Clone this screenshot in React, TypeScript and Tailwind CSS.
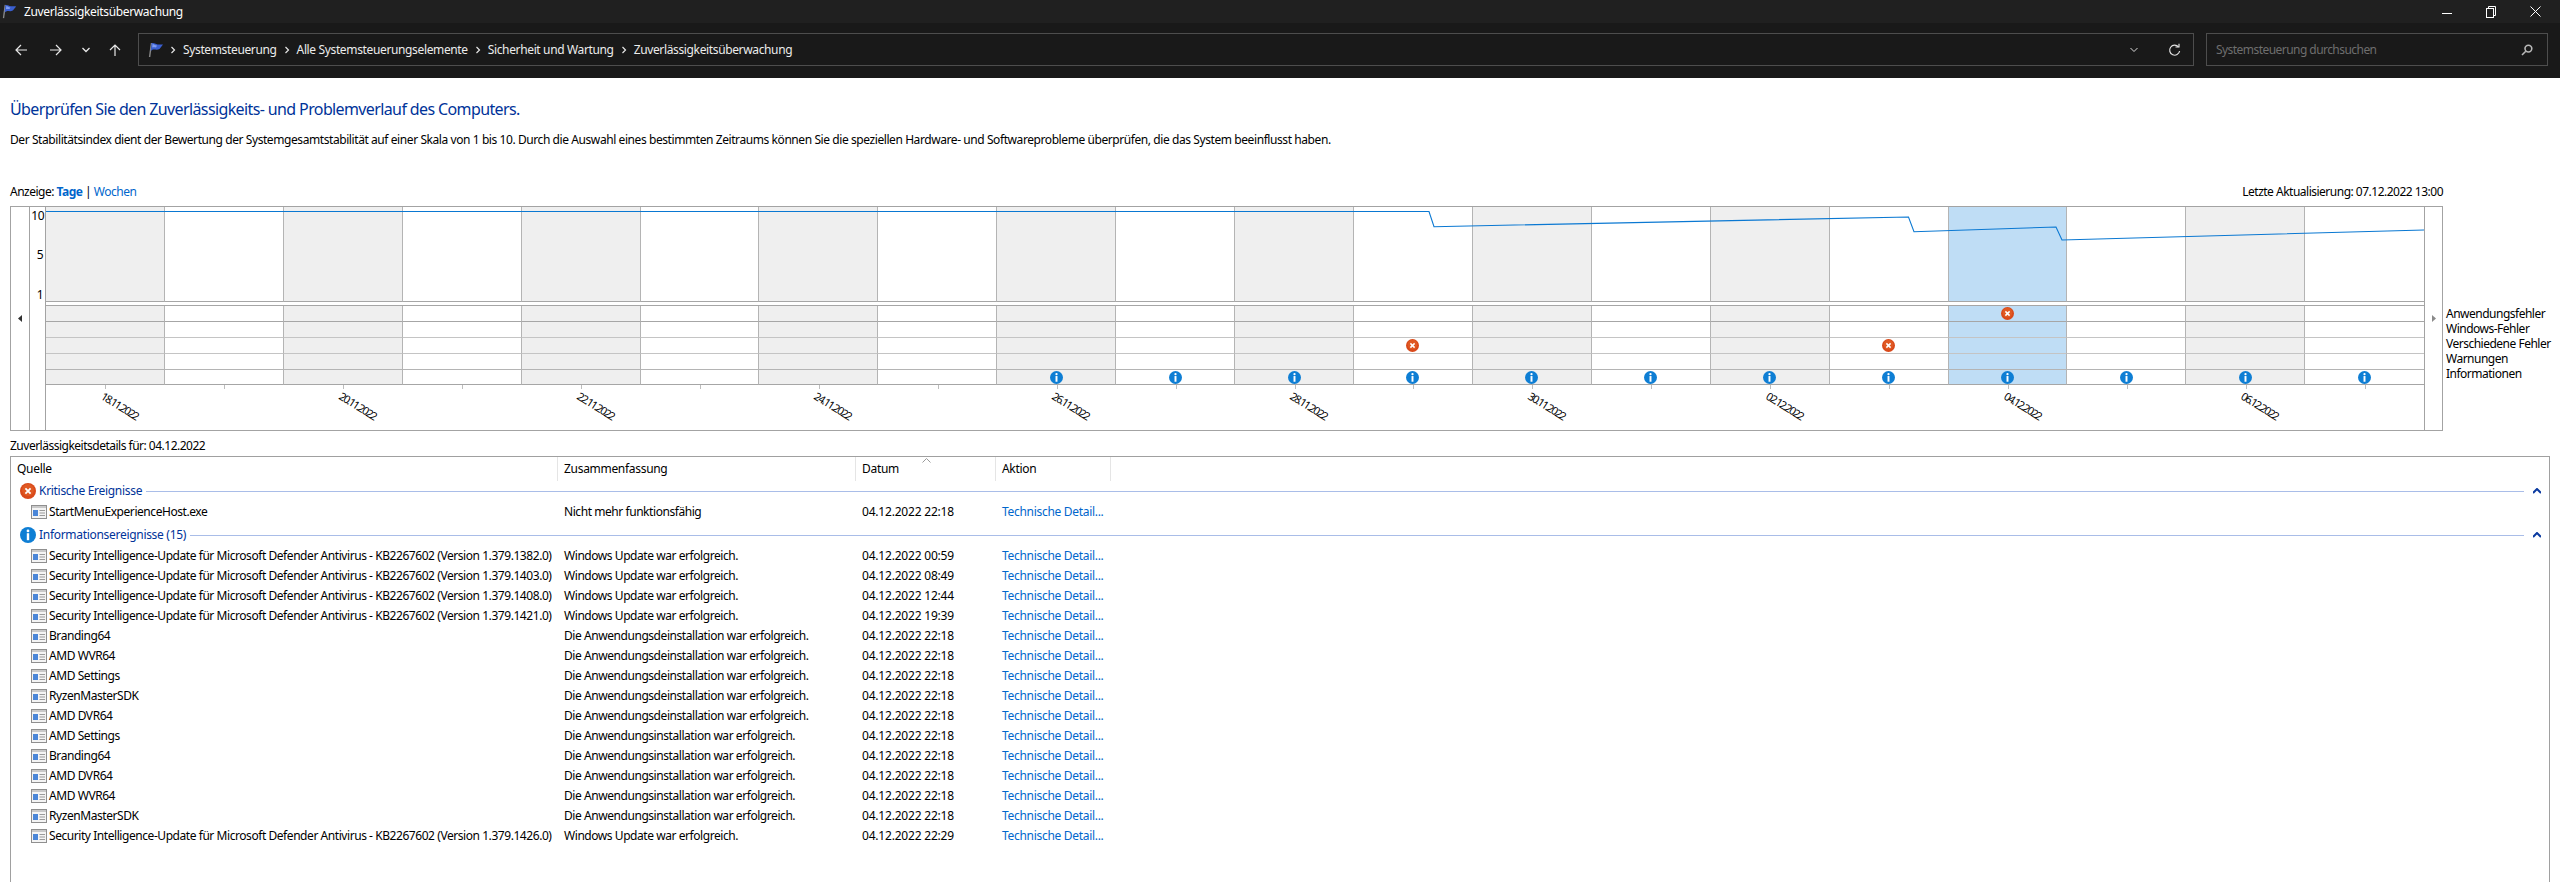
import React from "react";

const FONT = "font-['Noto_Sans','Liberation_Sans',sans-serif]";
const GRID = "grid grid-cols-[547px_298px_140px_115px_1fr]";

function Flag({ size = 16 }: { size?: number }) {
  return (
    <svg width={size} height={size} viewBox="0 0 16 16" className="shrink-0">
      <path d="M3.5 1 L1.6 15" stroke="#8a8a8a" strokeWidth="1.4" fill="none" />
      <path d="M3.6 1.2 C6 0.4 7 2 9.5 2.4 C11.5 2.6 13 2.2 15 2.6 C13.6 4.6 12.5 5.6 11.5 7 C9 8.4 7 7.2 5 7.6 C4.2 7.8 3.4 8.4 2.8 9 Z" fill="#3a5fd0" />
      <path d="M4.6 2 C6 2 7 3.4 9 3.6 L8 5.4 C6.6 5.4 5.4 5 4.2 5.6 Z" fill="#7f9cf0" />
    </svg>
  );
}

function ErrorIcon({ size = 13 }: { size?: number }) {
  return (
    <svg width={size} height={size} viewBox="0 0 16 16" className="shrink-0">
      <circle cx="8" cy="8" r="8" fill="#d9491a" />
      <circle cx="8" cy="7" r="6" fill="#e86a2c" opacity="0.5" />
      <path d="M5.4 5.4 L10.6 10.6 M10.6 5.4 L5.4 10.6" stroke="#fff" strokeWidth="1.8" />
    </svg>
  );
}

function InfoIcon({ size = 13 }: { size?: number }) {
  return (
    <svg width={size} height={size} viewBox="0 0 16 16" className="shrink-0">
      <circle cx="8" cy="8" r="8" fill="#0e7ed4" />
      <circle cx="8" cy="3.9" r="1.4" fill="#fff" />
      <rect x="6.8" y="6.2" width="2.4" height="7" fill="#fff" />
    </svg>
  );
}

function ListIcon() {
  return (
    <svg width="16" height="14" viewBox="0 0 16 14" className="shrink-0">
      <rect x="0.5" y="0.5" width="15" height="13" fill="#f4f4f4" stroke="#8f8f8f" />
      <rect x="1" y="1" width="14" height="2" fill="#c9c9c9" />
      <rect x="2" y="5" width="5" height="6" fill="#4a86d8" />
      <path d="M8.5 5.5 H14 M8.5 8 H14 M8.5 10.5 H14" stroke="#9a9a9a" strokeWidth="1" />
    </svg>
  );
}

function Collapse() {
  return (
    <svg width="8" height="6" viewBox="0 0 8 6" className="shrink-0">
      <path d="M0 5 L4 1 L8 5" stroke="#0a3aa0" strokeWidth="2" fill="none" />
    </svg>
  );
}

function Crumb() {
  return (
    <svg width="6" height="8" viewBox="0 0 6 8" className="shrink-0">
      <path d="M1.5 1 L4.5 4 L1.5 7" stroke="#e6e6e6" strokeWidth="1.2" fill="none" />
    </svg>
  );
}

function TitleBar() {
  return (
    <div className="flex h-[23px] items-center bg-[#202020] pl-[2px] text-white">
      <Flag size={15} />
      <span className="ml-[7px] text-[12px] tracking-[-0.35px]">Zuverlässigkeitsüberwachung</span>
      <div className="ml-auto flex items-center gap-[34px] pr-[19px]">
        <svg width="10" height="10" viewBox="0 0 10 10"><path d="M0 6.5 H10" stroke="#fff" /></svg>
        <svg width="10" height="12" viewBox="0 0 10 12" fill="none" stroke="#fff"><rect x="0.5" y="2.5" width="7" height="9" /><path d="M2.5 2.5 V0.5 H9.5 V9.5 H7.5" /></svg>
        <svg width="11" height="11" viewBox="0 0 11 11"><path d="M0.5 0.5 L10.5 10.5 M10.5 0.5 L0.5 10.5" stroke="#fff" /></svg>
      </div>
    </div>
  );
}

function Toolbar() {
  const crumbs = ["Systemsteuerung", "Alle Systemsteuerungselemente", "Sicherheit und Wartung", "Zuverlässigkeitsüberwachung"];
  return (
    <div className="flex h-[55px] items-start bg-[#191919] pt-[10px]">
      <div className="flex h-[33px] w-[138px] shrink-0 items-center pl-[15px]">
        <svg width="12" height="12" viewBox="0 0 12 12" fill="none" stroke="#e8e8e8" strokeWidth="1.2"><path d="M12 6 H1 M6 1 L1 6 L6 11" /></svg>
        <svg className="ml-[23px]" width="12" height="12" viewBox="0 0 12 12" fill="none" stroke="#e8e8e8" strokeWidth="1.2"><path d="M0 6 H11 M6 1 L11 6 L6 11" /></svg>
        <svg className="ml-[20px]" width="8" height="6" viewBox="0 0 8 6" fill="none" stroke="#e8e8e8" strokeWidth="1.3"><path d="M0.5 1 L4 4.5 L7.5 1" /></svg>
        <svg className="ml-[19px]" width="12" height="12" viewBox="0 0 12 12" fill="none" stroke="#e8e8e8" strokeWidth="1.2"><path d="M6 12 V1 M1 6 L6 1 L11 6" /></svg>
      </div>
      <div className="flex h-[33px] w-[2056px] shrink-0 items-center border border-[#4d4d4d] pl-[9px] text-[12px] tracking-[-0.36px] text-[#ececec]">
        <Flag size={16} />
        <div className="ml-[6px] flex items-center">
          <Crumb />
          {crumbs.map((c, i) => (
            <div key={c} className="flex items-center">
              <span className="ml-[7px]">{c}</span>
              {i < crumbs.length - 1 && <span className="ml-[7px]"><Crumb /></span>}
            </div>
          ))}
        </div>
        <div className="ml-auto flex items-center gap-[30px] pr-[12px]">
          <svg width="8" height="6" viewBox="0 0 8 6" fill="none" stroke="#d8d8d8"><path d="M0.5 1 L4 4.5 L7.5 1" /></svg>
          <svg width="13" height="14" viewBox="0 0 13 14" fill="none" stroke="#e0e0e0" strokeWidth="1.2"><path d="M10.5 4 A5 5 0 1 0 11.6 8" /><path d="M7.5 4 H11 V0.8" /></svg>
        </div>
      </div>
      <div className="ml-[12px] flex h-[33px] w-[342px] shrink-0 items-center border border-[#4d4d4d] pl-[9px] pr-[14px] text-[12px] tracking-[-0.55px] text-[#6e6e6e]">
        <span>Systemsteuerung durchsuchen</span>
        <svg className="ml-auto" width="12" height="12" viewBox="0 0 12 12" fill="none" stroke="#b8b8b8" strokeWidth="1.6"><circle cx="7.4" cy="4.6" r="3.4" /><path d="M4.8 7.2 L1 11" /></svg>
      </div>
    </div>
  );
}

const dates: Record<number, string> = {
  0: "18.11.2022", 2: "20.11.2022", 4: "22.11.2022", 6: "24.11.2022", 8: "26.11.2022",
  10: "28.11.2022", 12: "30.11.2022", 14: "02.12.2022", 16: "04.12.2022", 18: "06.12.2022",
};

function Column({ index }: { index: number }) {
  const selected = index === 16;
  const gray = index % 2 === 0;
  const bg = selected ? "bg-[#bfddf5]" : gray ? "bg-[#efefef]" : "bg-white";
  const right = index === 19 ? "" : "border-r border-r-[#b4b4b4]";
  const info = index >= 8;
  const err0 = index === 16;
  const err2 = index === 11 || index === 15;
  return (
    <div className="flex min-w-0 flex-1 flex-col">
      <div className={`h-[95px] border-b border-b-[#a6a6a6] ${bg} ${right}`} />
      <div className="h-[3px] bg-white" />
      <div className="h-px bg-[#a6a6a6]" />
      <div className={`flex h-[16px] items-center justify-center border-b border-b-[#a6a6a6] ${bg} ${right}`}>{err0 && <ErrorIcon />}</div>
      <div className={`flex h-[16px] items-center justify-center border-b border-b-[#c4c4c4] ${bg} ${right}`} />
      <div className={`flex h-[16px] items-center justify-center border-b border-b-[#c4c4c4] ${bg} ${right}`}>{err2 && <ErrorIcon />}</div>
      <div className={`flex h-[16px] items-center justify-center border-b border-b-[#b4b4b4] ${bg} ${right}`} />
      <div className={`flex h-[15px] items-center justify-center border-b border-b-[#a6a6a6] ${bg} ${right}`}>{info && <InfoIcon />}</div>
      <div className="relative flex-1">
        <div className="absolute left-1/2 top-0 h-[4px] w-px bg-[#bdbdbd]" />
        {dates[index] && (
          <span className="absolute left-[53px] top-[15px] w-[42px] rotate-[32deg] whitespace-nowrap text-center text-[11px] leading-[11px] tracking-[-1.5px] text-black">
            {dates[index]}
          </span>
        )}
      </div>
    </div>
  );
}

function Chart() {
  const legend = ["Anwendungsfehler", "Windows-Fehler", "Verschiedene Fehler", "Warnungen", "Informationen"];
  return (
    <div className="flex">
      <div className="flex h-[225px] w-[2433px] shrink-0 border border-[#a3a3a3]">
        <div className="flex w-[19px] shrink-0 items-center justify-center border-r border-r-[#a3a3a3]">
          <svg width="4" height="7" viewBox="0 0 4 7"><path d="M4 0 V7 L0 3.5 Z" fill="#303030" /></svg>
        </div>
        <div className="flex w-[16px] shrink-0 flex-col items-end border-r border-r-[#a3a3a3] pr-[1px] text-[12px] leading-[16px] tracking-[-0.5px] text-black">
          <span className="mt-[1px]">10</span>
          <span className="mt-[23px] pr-[1px]">5</span>
          <span className="mt-[24px] pr-[1px]">1</span>
        </div>
        <div className="relative flex w-[2378px] shrink-0">
          {Array.from({ length: 20 }, (_, i) => <Column key={i} index={i} />)}
          <svg className="absolute left-0 top-0" width="2378" height="95" viewBox="0 0 2378 95" fill="none">
            <path d="M0 4.5 H1383 L1388 19.7 L1862.5 10 L1868 24.7 L2010 20 L2016 33 L2378 23" stroke="#0a78d2" strokeWidth="1.1" />
          </svg>
        </div>
        <div className="flex w-[18px] shrink-0 items-center justify-center border-l border-l-[#a3a3a3]">
          <svg width="4" height="7" viewBox="0 0 4 7"><path d="M0 0 V7 L4 3.5 Z" fill="#8a8a8a" /></svg>
        </div>
      </div>
      <div className="ml-[3px] flex flex-col pt-[100px] text-[12px] leading-[15px] tracking-[-0.5px] text-black">
        {legend.map((l) => <span key={l} className="whitespace-nowrap">{l}</span>)}
      </div>
    </div>
  );
}

const rows: [string, string, string][] = [
  ["Security Intelligence-Update für Microsoft Defender Antivirus - KB2267602 (Version 1.379.1382.0)", "Windows Update war erfolgreich.", "04.12.2022 00:59"],
  ["Security Intelligence-Update für Microsoft Defender Antivirus - KB2267602 (Version 1.379.1403.0)", "Windows Update war erfolgreich.", "04.12.2022 08:49"],
  ["Security Intelligence-Update für Microsoft Defender Antivirus - KB2267602 (Version 1.379.1408.0)", "Windows Update war erfolgreich.", "04.12.2022 12:44"],
  ["Security Intelligence-Update für Microsoft Defender Antivirus - KB2267602 (Version 1.379.1421.0)", "Windows Update war erfolgreich.", "04.12.2022 19:39"],
  ["Branding64", "Die Anwendungsdeinstallation war erfolgreich.", "04.12.2022 22:18"],
  ["AMD WVR64", "Die Anwendungsdeinstallation war erfolgreich.", "04.12.2022 22:18"],
  ["AMD Settings", "Die Anwendungsdeinstallation war erfolgreich.", "04.12.2022 22:18"],
  ["RyzenMasterSDK", "Die Anwendungsdeinstallation war erfolgreich.", "04.12.2022 22:18"],
  ["AMD DVR64", "Die Anwendungsdeinstallation war erfolgreich.", "04.12.2022 22:18"],
  ["AMD Settings", "Die Anwendungsinstallation war erfolgreich.", "04.12.2022 22:18"],
  ["Branding64", "Die Anwendungsinstallation war erfolgreich.", "04.12.2022 22:18"],
  ["AMD DVR64", "Die Anwendungsinstallation war erfolgreich.", "04.12.2022 22:18"],
  ["AMD WVR64", "Die Anwendungsinstallation war erfolgreich.", "04.12.2022 22:18"],
  ["RyzenMasterSDK", "Die Anwendungsinstallation war erfolgreich.", "04.12.2022 22:18"],
  ["Security Intelligence-Update für Microsoft Defender Antivirus - KB2267602 (Version 1.379.1426.0)", "Windows Update war erfolgreich.", "04.12.2022 22:29"],
];

function Row({ r }: { r: [string, string, string] }) {
  return (
    <div className={`${GRID} h-[20px] items-center text-[12px] tracking-[-0.44px] text-black`}>
      <div className="flex items-center whitespace-nowrap pl-[20px]">
        <ListIcon />
        <span className="ml-[2px]">{r[0]}</span>
      </div>
      <span className="pl-[6px]">{r[1]}</span>
      <span className="pl-[6px] tracking-[-0.2px]">{r[2]}</span>
      <span className="pl-[6px] tracking-[-0.3px] text-[#0066cc]">Technische Detail...</span>
    </div>
  );
}

function Group({ icon, label }: { icon: React.ReactNode; label: string }) {
  return (
    <div className="flex h-[20px] items-center pl-[9px] pr-[8px] text-[12px] tracking-[-0.3px] text-[#003399]">
      {icon}
      <span className="ml-[3px] whitespace-nowrap">{label}</span>
      <div className="ml-[4px] h-px flex-1 bg-[#a9bde8]" />
      <div className="ml-[9px]"><Collapse /></div>
    </div>
  );
}

function Details() {
  const head = ["Quelle", "Zusammenfassung", "Datum", "Aktion"];
  return (
    <div className="mt-[2px] flex w-[2540px] flex-1 flex-col border-l border-r border-t border-[#a0a0a0]">
      <div className={`${GRID} relative h-[24px] text-[12px] tracking-[-0.3px] text-black`}>
        {head.map((h) => (
          <div key={h} className="flex items-center border-r border-r-[#e5e5e5] pl-[6px]">{h}</div>
        ))}
        <svg className="absolute left-[911px] top-[1px]" width="9" height="5" viewBox="0 0 9 5" fill="none" stroke="#9a9a9a"><path d="M0.5 4.5 L4.5 0.5 L8.5 4.5" /></svg>
      </div>
      <Group icon={<ErrorIcon size={16} />} label="Kritische Ereignisse" />
      <div className="mt-px">
        <Row r={["StartMenuExperienceHost.exe", "Nicht mehr funktionsfähig", "04.12.2022 22:18"]} />
      </div>
      <div className="mt-[3px]">
        <Group icon={<InfoIcon size={16} />} label="Informationsereignisse (15)" />
      </div>
      <div className="mt-px flex flex-col">
        {rows.map((r, i) => <Row key={i} r={r} />)}
      </div>
    </div>
  );
}

export default function App() {
  return (
    <div className={`${FONT} flex h-[882px] w-[2560px] flex-col overflow-hidden bg-white`}>
      <TitleBar />
      <Toolbar />
      <div className="flex min-h-0 flex-1 flex-col pl-[10px]">
        <h1 className="mt-[20px] h-[22px] text-[16px] font-normal leading-[22px] tracking-[-0.62px] text-[#003399]">
          Überprüfen Sie den Zuverlässigkeits- und Problemverlauf des Computers.
        </h1>
        <p className="mt-[12px] h-[16px] text-[12px] leading-[16px] tracking-[-0.42px] text-black">
          Der Stabilitätsindex dient der Bewertung der Systemgesamtstabilität auf einer Skala von 1 bis 10. Durch die Auswahl eines bestimmten Zeitraums können Sie die speziellen Hardware- und Softwareprobleme überprüfen, die das System beeinflusst haben.
        </p>
        <div className="mt-[36px] flex h-[16px] w-[2433px] justify-between text-[12px] leading-[16px] tracking-[-0.5px] text-black">
          <div>
            Anzeige: <span className="font-bold text-[#0066cc]">Tage</span> | <span className="text-[#0066cc]">Wochen</span>
          </div>
          <div>Letzte Aktualisierung: 07.12.2022 13:00</div>
        </div>
        <div className="mt-[6px]"><Chart /></div>
        <div className="mt-[7px] h-[16px] text-[12px] leading-[16px] tracking-[-0.5px] text-black">Zuverlässigkeitsdetails für: 04.12.2022</div>
        <Details />
      </div>
    </div>
  );
}
